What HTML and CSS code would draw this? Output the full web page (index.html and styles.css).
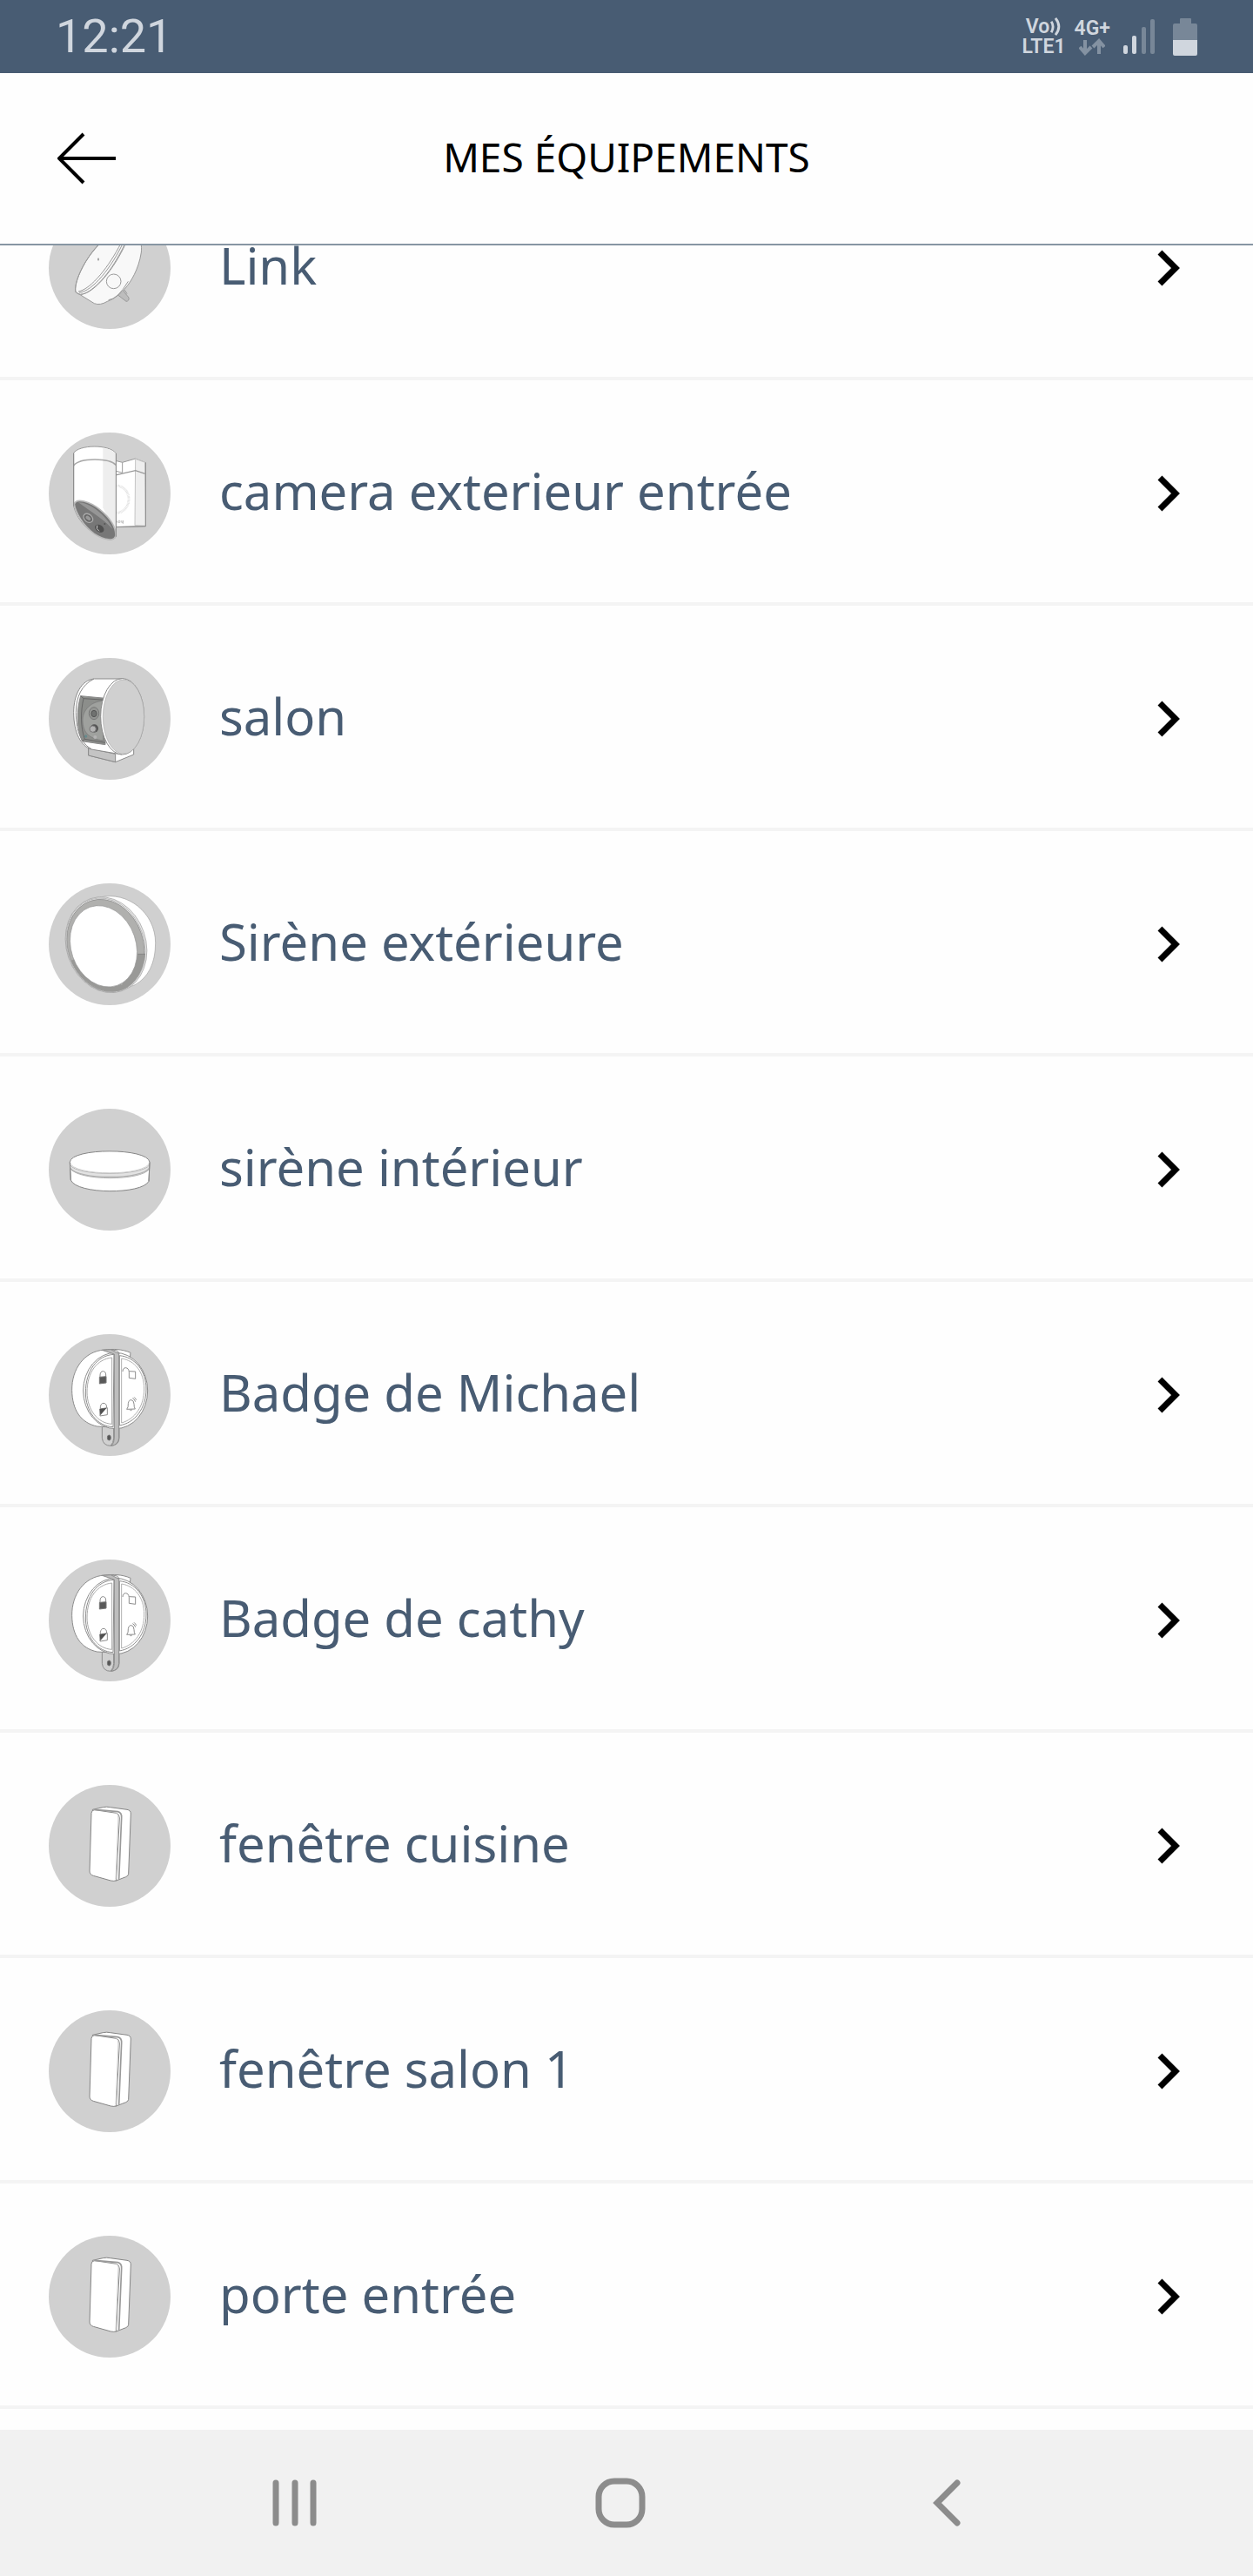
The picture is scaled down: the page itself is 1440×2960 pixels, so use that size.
FILE: index.html
```html
<!DOCTYPE html>
<html lang="fr">
  <head>
    <meta charset="utf-8">
    <meta name="viewport" content="width=device-width, initial-scale=1">
    <title>Mes équipements</title>
    <link rel="stylesheet" href="styles.css">
  </head>
  <body>
    <!-- Shared icons -->
    <svg class="sprite" aria-hidden="true">
      <symbol id="chevron" viewBox="0 0 26 44">
        <path d="M3 4 L21 22 L3 40" fill="none" stroke="#000" stroke-width="7"/>
      </symbol>
      <symbol id="badge" viewBox="48 39 420 420">
        <g fill="none" stroke="#8c8c8c" stroke-width="3">
          <path d="M232 355 V397 Q235 424 262 424 Q291 422 291 396 V355 Z" fill="#d0d0d0"/>
          <path d="M272 360 V398 Q271 414 262 423"/>
          <ellipse cx="256" cy="396" rx="6" ry="9" fill="#555" stroke="#777"/>
          <path d="M240 93 C170 98 127 160 128 232 C129 300 158 345 215 357 L300 362 L330 103 C300 90 270 90 240 93 Z" fill="#fff"/>
          <ellipse cx="278" cy="234" rx="111" ry="131" fill="#fff"/>
          <path d="M273 109 C215 112 175 165 175 240 C175 305 215 357 270 359 Z"/>
          <path d="M266 120 C215 125 180 170 180 240 C181 300 217 347 266 349 Z" stroke="#a8a8a8"/>
          <path d="M292 113 C345 118 384 165 384 228 C384 295 345 345 292 354 Z"/>
          <path d="M299 123 C345 130 377 170 377 228 C377 288 345 332 299 345 Z" stroke="#b0b0b0"/>
          <path d="M232 94 L262 92 L290 106 V398 Q288 420 264 424 Q274 414 274 398 V108 Z" fill="#bdbdbd"/>
          <path d="M262 92 L284 96 L292 106"/>
          <path d="M225 187 V180 Q226 167 235 167 Q245 167 245 180 V185"/>
          <path d="M223 187 L246 185 V207 L223 210 Z" fill="#595959" stroke="#777"/>
          <path d="M226 296 V290 Q228 277 237 277 Q248 278 248 292"/>
          <path d="M224 297 L250 293 V317 L225 321 Z"/>
          <path d="M224 297 L248 293 L226 319 Z" fill="#505050" stroke="none"/>
          <path d="M303 168 Q304 155 313 155 Q324 156 325 170 V190 L347 193 V168 L325 167"/>
          <path d="M317 298 Q323 292 322 278 Q324 265 333 266 Q342 268 342 280 Q342 292 346 297 Z M327 299 Q331 305 336 299 M337 260 Q344 262 347 272 M342 256 Q347 260 350 266"/>
        </g>
      </symbol>
      <symbol id="opening" viewBox="48 33 420 420">
        <g fill="none" stroke="#858585" stroke-width="3" stroke-linejoin="round">
          <path d="M199 118 L235 110 Q248 107 260 110 L318 118 Q331 120 331 132 L323 340 Q322 347 314 350 L278 364 Z" fill="#fff"/>
          <path d="M207 119 L281 130 Q292 133 292 147 L281 362 Q274 366 262 363 L202 346 Q189 342 189 330 L195 130 Q196 119 207 119 Z" fill="#fff"/>
          <path d="M207 118 L286 125 Q300 128 299 146 L290 359" stroke="#9a9a9a" stroke-width="5"/>
          <path d="M281 130 Q290 134 288 150 L279 358" stroke="#c8c8c8"/>
        </g>
      </symbol>
    </svg>

    <div class="statusbar">
      <span class="clock">12:21</span>
      <div class="indicators">
        <div class="volte">
          <span class="vo">Vo<svg class="waves" viewBox="0 0 14 24" aria-hidden="true"><path d="M2 6 Q6 12 2 19 M7 2 Q15 12 7 22" fill="none" stroke="#d0d6de" stroke-width="3"/></svg></span>
          <span>LTE1</span>
        </div>
        <div class="network">
          <span>4G+</span>
          <svg class="data" viewBox="0 0 30 20" aria-hidden="true"><path d="M7 2 V15 M1 10 L7 17 L14 10 M23 18 V5 M16 10 L23 3 L29 10" fill="none" stroke="#8492a2" stroke-width="4"/></svg>
        </div>
        <svg class="signal" viewBox="0 0 38 42" aria-hidden="true">
          <rect x="1" y="31" width="5" height="10" rx="2" fill="#d0d6de"/>
          <rect x="11" y="20" width="5" height="21" rx="2" fill="#d0d6de"/>
          <rect x="22" y="10" width="5" height="31" rx="2" fill="#788798"/>
          <rect x="32" y="1" width="5" height="40" rx="2" fill="#788798"/>
        </svg>
        <svg class="battery" viewBox="0 0 28 43" aria-hidden="true">
          <path d="M8 1 Q8 0 9 0 H20 Q21 0 21 1 V6 H26 Q28 6 28 8 V25 H0 V8 Q0 6 2 6 H8 Z" fill="#788798"/>
          <path d="M0 25 H28 V41 Q28 43 26 43 H2 Q0 43 0 41 Z" fill="#d0d6de"/>
        </svg>
      </div>
    </div>

    <header class="header">
      <button class="back" type="button" aria-label="Retour">
        <svg viewBox="0 0 68 60"><path d="M67 30 H3 M30 2 L2 30 L30 58" fill="none" stroke="#000" stroke-width="4"/></svg>
      </button>
      <h1 class="title">MES ÉQUIPEMENTS</h1>
    </header>

    <main class="content">
      <ul class="devices">
        <li>
          <a class="device" href="#link">
            <svg class="picture" viewBox="48 -96 420 420" aria-hidden="true">
              <g fill="none" stroke="#999" stroke-width="3">
                <path d="M285 196 L302 189 L324 216 Q326 228 315 229 L284 205 Z" fill="#bdbdbd"/>
                <path d="M302 189 Q313 188 318 203"/>
                <path d="M140 196 C134 140 215 0 310 -20 C350 -20 372 15 367 60 C358 120 330 162 315 180 C295 205 270 222 250 229 Q225 244 205 236 Z" fill="#f8f8f8"/>
                <path d="M140 190 C137 140 215 5 285 -10 C330 0 310 35 290 70 C250 145 190 204 158 205 Q142 204 140 190 Z"/>
                <path d="M158 205 C205 202 275 115 313 30 M153 199 C200 194 265 110 303 30 M150 195 C195 187 258 105 296 30"/>
                <circle cx="272" cy="160" r="25"/>
                <path d="M254 224 Q285 222 322 160"/>
                <ellipse cx="219" cy="84" rx="1" ry="4"/>
              </g>
            </svg>
            <span class="name">Link</span>
            <svg class="chevron" aria-hidden="true"><use href="#chevron"/></svg>
          </a>
        </li>
        <li>
          <a class="device" href="#camera">
            <svg class="picture" viewBox="48 51 420 420" aria-hidden="true">
              <g fill="none" stroke="#999" stroke-width="3">
                <path d="M270 146 L302 154 L347 141 L380 154 L382 374 L270 377 Z" fill="#fff"/>
                <path d="M347 142 L380 154 L382 373 L345 371 Z" fill="#eee" stroke="#c4c4c4"/>
                <path d="M302 154 V190 L270 181"/>
                <path d="M270 200 L347 182 L380 193" stroke-width="4"/>
                <path d="M270 377 L382 374 V154" stroke="#888"/>
                <path d="M280 234 A44 47 0 0 1 280 328" stroke="#ddd" stroke-width="9" stroke-dasharray="2 2"/>
                <path d="M281 353 L285 362 M289 355 H294 V361 H288 Z M299 354 V361 H304 V354 V366" stroke="#aaa" stroke-width="2"/>
                <path d="M134 122 C150 93 257 90 280 123 V410 Q270 430 230 412 C180 390 145 350 134 305 Z" fill="#fff"/>
                <path d="M235 105 Q267 108 279 124 V400 L235 310 Z" fill="#eee" stroke="none"/>
                <path d="M134 165 C155 137 257 138 280 163" stroke="#a8a8a8" stroke-width="5"/>
                <path d="M136 298 C142 275 190 288 225 317 C265 350 279 380 279 405 C276 428 241 423 205 400 C165 371 140 325 136 298 Z" fill="#777" stroke="#bbb" stroke-width="5"/>
                <path d="M150 292 C180 290 245 330 269 385 C240 352 195 325 150 292 Z" fill="#969696" stroke="none"/>
                <ellipse cx="184" cy="346" rx="18" ry="13" transform="rotate(40 184 346)" stroke="#aaa" stroke-width="4" fill="#666"/>
                <ellipse cx="184" cy="346" rx="10" ry="6" transform="rotate(40 184 346)" fill="#999" stroke="none"/>
                <ellipse cx="223" cy="382" rx="17" ry="12" transform="rotate(35 223 382)" fill="#505050" stroke="none"/>
                <path d="M215 371 Q210 384 222 391" stroke="#ccc"/>
                <circle cx="241" cy="366" r="3" fill="#555" stroke="none"/>
                <path d="M134 122 V305 M280 123 V410" stroke="#8a8a8a"/>
              </g>
            </svg>
            <span class="name">camera exterieur entrée</span>
            <svg class="chevron" aria-hidden="true"><use href="#chevron"/></svg>
          </a>
        </li>
        <li>
          <a class="device" href="#salon">
            <svg class="picture" viewBox="48 47 420 420" aria-hidden="true">
              <g fill="none" stroke="#8a8a8a" stroke-width="3">
                <path d="M185 358 V383 L278 406 L341 380 V345 Z" fill="#fff"/>
                <path d="M185 358 V383 L278 406 V378 Z" fill="#c4c4c4"/>
                <path d="M305 119 H205 C160 123 134 175 134 235 C134 305 160 352 195 362 L300 380 Z" fill="#fff"/>
                <path d="M204 119 C162 140 142 180 142 235 C142 305 163 343 195 361"/>
                <path d="M158 178 L243 186 V346 L163 334 C143 285 144 225 158 178 Z" fill="#8c8e8b"/>
                <path d="M158 178 L168 187 C158 230 157 285 172 327 L163 334 M168 187 L243 192 M172 327 L243 339" stroke="#666"/>
                <path d="M236 195 C185 198 164 235 165 263 C166 300 182 325 236 332 Z" fill="#9fa19e" stroke="#777" stroke-width="2"/>
                <ellipse cx="204" cy="238" rx="17" ry="21" fill="#929491" stroke="#777"/>
                <ellipse cx="204" cy="239" rx="9" ry="11" fill="#707270" stroke="#555"/>
                <circle cx="205" cy="290" r="14" fill="#555" stroke="none"/>
                <circle cx="200" cy="292" r="11" fill="#b4b4b4" stroke="#777"/>
                <circle cx="208" cy="320" r="6" fill="#b4b4b4" stroke="none"/>
                <circle cx="176" cy="317" r="5" fill="#668a8d" stroke="none"/>
                <ellipse cx="302" cy="249" rx="75" ry="131" fill="#fff"/>
                <ellipse cx="306" cy="250" rx="71" ry="128" fill="#d0d0d0" stroke="#aaa" stroke-width="2"/>
              </g>
            </svg>
            <span class="name">salon</span>
            <svg class="chevron" aria-hidden="true"><use href="#chevron"/></svg>
          </a>
        </li>
        <li>
          <a class="device" href="#sirene-ext">
            <svg class="picture" viewBox="48 44 420 420" aria-hidden="true">
              <g fill="none" stroke="#a0a0a0" stroke-width="2">
                <path d="M225 92 C320 70 416 145 416 250 C416 320 390 370 345 394 L280 418 Z" fill="#fff"/>
                <ellipse cx="246" cy="256" rx="137" ry="168" transform="rotate(-19 246 256)" fill="#e8e8e8"/>
                <ellipse cx="244" cy="257" rx="133" ry="165" transform="rotate(-19 244 257)" fill="#fff"/>
                <ellipse cx="244" cy="258" rx="130" ry="162" transform="rotate(-19 244 258)" fill="#b0b0ae" stroke="#888"/>
                <path d="M381 289 C374 350 338 410 280 416 C220 421 155 380 125 310 L150 300 L300 395 L355 288 Z" fill="#999997" stroke="none"/>
                <ellipse cx="237" cy="261" rx="112" ry="143" transform="rotate(-19 237 261)" fill="#fff" stroke="#999"/>
                <path d="M355 288 H381" stroke="#777"/>
              </g>
            </svg>
            <span class="name">Sirène extérieure</span>
            <svg class="chevron" aria-hidden="true"><use href="#chevron"/></svg>
          </a>
        </li>
        <li>
          <a class="device" href="#sirene-int">
            <svg class="picture" viewBox="48 42 420 420" aria-hidden="true">
              <g fill="none" stroke="#858585" stroke-width="3">
                <path d="M121 226 C125 176 390 176 396 226 L393 292 C370 338 145 338 124 288 Z" fill="#fff"/>
                <path d="M122 236 C145 275 370 275 395 236 V249 C370 292 147 292 122 247 Z" fill="#e2e2e2" stroke="#b4b4b4"/>
                <path d="M122 246 C147 288 370 288 395 246" stroke="#b0b0b0" stroke-width="4"/>
                <path d="M121 226 C125 276 390 276 396 226" stroke="#ccc"/>
                <path d="M121 226 L124 288 M396 226 L393 292"/>
              </g>
            </svg>
            <span class="name">sirène intérieur</span>
            <svg class="chevron" aria-hidden="true"><use href="#chevron"/></svg>
          </a>
        </li>
        <li>
          <a class="device" href="#badge-michael">
            <svg class="picture" aria-hidden="true"><use href="#badge"/></svg>
            <span class="name">Badge de Michael</span>
            <svg class="chevron" aria-hidden="true"><use href="#chevron"/></svg>
          </a>
        </li>
        <li>
          <a class="device" href="#badge-cathy">
            <svg class="picture" aria-hidden="true"><use href="#badge"/></svg>
            <span class="name">Badge de cathy</span>
            <svg class="chevron" aria-hidden="true"><use href="#chevron"/></svg>
          </a>
        </li>
        <li>
          <a class="device" href="#fenetre-cuisine">
            <svg class="picture" aria-hidden="true"><use href="#opening"/></svg>
            <span class="name">fenêtre cuisine</span>
            <svg class="chevron" aria-hidden="true"><use href="#chevron"/></svg>
          </a>
        </li>
        <li>
          <a class="device" href="#fenetre-salon">
            <svg class="picture" aria-hidden="true"><use href="#opening"/></svg>
            <span class="name">fenêtre salon 1</span>
            <svg class="chevron" aria-hidden="true"><use href="#chevron"/></svg>
          </a>
        </li>
        <li>
          <a class="device" href="#porte-entree">
            <svg class="picture" aria-hidden="true"><use href="#opening"/></svg>
            <span class="name">porte entrée</span>
            <svg class="chevron" aria-hidden="true"><use href="#chevron"/></svg>
          </a>
        </li>
      </ul>
    </main>

    <nav class="navbar" aria-label="Navigation">
      <button type="button" aria-label="Applications récentes">
        <svg viewBox="0 0 60 60"><path d="M8 7 V53 M30 7 V53 M51 7 V53" stroke="#8c8c8c" stroke-width="7" stroke-linecap="round"/></svg>
      </button>
      <button type="button" aria-label="Accueil">
        <svg viewBox="0 0 60 60"><rect x="5" y="5" width="50" height="50" rx="18" fill="none" stroke="#8c8c8c" stroke-width="7"/></svg>
      </button>
      <button type="button" aria-label="Précédent">
        <svg viewBox="0 0 60 60"><path d="M42 7 L19 30 L42 53" fill="none" stroke="#8c8c8c" stroke-width="7" stroke-linecap="round"/></svg>
      </button>
    </nav>
  </body>
</html>
```

FILE: styles.css
```css
* {
  box-sizing: border-box;
}
body {
  margin: 0;
  min-height: 100vh;
  display: flex;
  flex-direction: column;
  background-color: #fefefe;
  font-family: "Noto Sans", sans-serif;
}
button {
  display: flex;
  align-items: center;
  justify-content: center;
  padding: 0;
  border: none;
  background: none;
}
.sprite {
  position: absolute;
  width: 0;
  height: 0;
}

/* Status bar */
.statusbar {
  display: flex;
  align-items: center;
  justify-content: space-between;
  height: 84px;
  padding: 0 64px;
  background-color: #485c73;
  color: #d0d6de;
  font-family: Roboto, sans-serif;
}
.clock {
  font-size: 54px;
  line-height: 84px;
}
.indicators {
  display: flex;
  align-items: center;
  font-size: 23px;
  font-weight: 600;
  line-height: 23px;
}
.volte,
.network {
  display: flex;
  flex-direction: column;
  align-items: center;
}
.volte {
  margin-right: 10px;
}
.vo {
  display: flex;
}
.waves {
  width: 14px;
  height: 23px;
}
.data {
  width: 30px;
  height: 20px;
}
.signal {
  width: 38px;
  height: 42px;
  margin-left: 14px;
}
.battery {
  width: 28px;
  height: 43px;
  margin-left: 20px;
}

/* Header */
.header {
  display: grid;
  grid-template-columns: 1fr auto 1fr;
  align-items: center;
  height: 198px;
  padding: 0 66px;
  border-bottom: 2px solid #8796a3;
}
.back {
  justify-self: start;
}
.back svg {
  width: 68px;
  height: 60px;
}
.title {
  margin: 0;
  padding-bottom: 4px;
  color: #000;
  font-size: 46px;
  font-weight: 400;
}

/* Device list, scrolled a little under the header */
.content {
  flex: 1;
  overflow: hidden;
}
.devices {
  margin: -104px 0 0;
  padding: 0;
  list-style: none;
}
.device {
  display: flex;
  align-items: center;
  gap: 56px;
  padding: 60px 84px 55px 56px;
  border-bottom: 4px solid #f4f4f4;
  color: #485c73;
  text-decoration: none;
}
.picture {
  flex: none;
  width: 140px;
  height: 140px;
  border-radius: 50%;
  background-color: #d0d0d0;
}
.name {
  flex: 1;
  padding-bottom: 6px;
  font-size: 58px;
  line-height: 80px;
}
.chevron {
  flex: none;
  width: 26px;
  height: 44px;
}

/* Bottom navigation */
.navbar {
  display: flex;
  height: 168px;
  padding: 0 165px 0 152px;
  background-color: #f1f1f1;
}
.navbar button {
  flex: 1;
}
.navbar svg {
  width: 60px;
  height: 60px;
}
```
